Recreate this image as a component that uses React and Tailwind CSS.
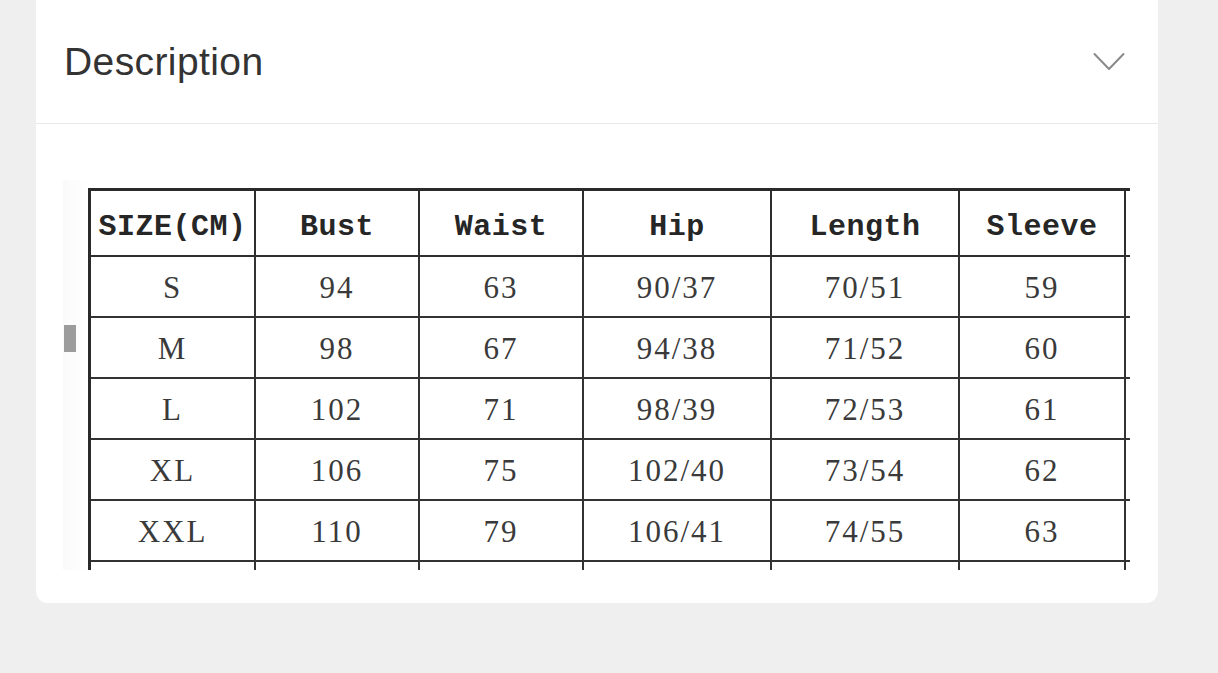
import React from 'react';

const headers = ['SIZE(CM)', 'Bust', 'Waist', 'Hip', 'Length', 'Sleeve'];

const rows = [
  ['S', '94', '63', '90/37', '70/51', '59'],
  ['M', '98', '67', '94/38', '71/52', '60'],
  ['L', '102', '71', '98/39', '72/53', '61'],
  ['XL', '106', '75', '102/40', '73/54', '62'],
  ['XXL', '110', '79', '106/41', '74/55', '63'],
];

const ChevronDown = () => (
  <svg width="32" height="20" viewBox="0 0 32 20" fill="none">
    <path d="M1.5 2 L16 17 L30.5 2" stroke="#8a8a8a" strokeWidth="2" strokeLinecap="round" strokeLinejoin="round" />
  </svg>
);

// size chart, drawn like the scanned table in the product photo
const SizeChart = () => {
  const cols = 'grid grid-cols-[165px_164px_164px_188px_188px_166px_20px]';

  return (
    <div className="relative flex">
      {/* faint scan edge + marker on the left */}
      <div className="w-[25px] h-[390px] mt-[-8px] bg-gradient-to-r from-[#fafafa] to-white relative">
        <div className="absolute left-[1px] top-[145px] w-[12px] h-[27px] bg-[#9c9c9c]" />
      </div>

      <div className="w-[1042px] h-[382px] overflow-hidden">
        <div className="border-l-[3px] border-t-[3px] border-[#2a2a2a] w-max">
          <div className={`${cols} h-[66px]`}>
            {headers.map((h) => (
              <div
                key={h}
                className="flex items-center justify-center pt-[8px] border-r-2 border-b-2 border-[#2e2e2e] font-['Liberation_Mono',monospace] font-bold text-[30px] text-[#262626] tracking-[0.5px]"
              >
                {h}
              </div>
            ))}
            <div className="border-b-2 border-[#2e2e2e]" />
          </div>

          {rows.map((r) => (
            <div key={r[0]} className={`${cols} h-[61px]`}>
              {r.map((v, i) => (
                <div
                  key={i}
                  className="flex items-center justify-center pt-[3px] border-r-2 border-b-2 border-[#333] font-['Liberation_Serif',serif] text-[31px] text-[#3a3a3a] tracking-[2px]"
                >
                  {v}
                </div>
              ))}
              <div className="border-b-2 border-[#333]" />
            </div>
          ))}

          <div className={`${cols} h-[12px]`}>
            {headers.map((h) => (
              <div key={h} className="border-r-2 border-[#333]" />
            ))}
            <div />
          </div>
        </div>
      </div>
    </div>
  );
}

export default function App() {
  return (
    <div className="min-h-[673px] w-full bg-[#efefef] font-['Liberation_Sans',Arial,sans-serif]">
      <div className="ml-[36px] w-[1122px] bg-white rounded-b-[12px]">
        {/* Header */}
        <div className="h-[124px] flex items-center justify-between pl-[28px] pr-[33px] border-b-[1.5px] border-[#e9e9e9]">
          <h2 className="text-[39px] text-[#333] leading-none tracking-[0.4px] mt-[-1px]">Description</h2>
          <ChevronDown />
        </div>

        {/* Body */}
        <div className="pt-[64px] pb-[33px] pl-[27px]">
          <SizeChart />
        </div>
      </div>
    </div>
  );
}
